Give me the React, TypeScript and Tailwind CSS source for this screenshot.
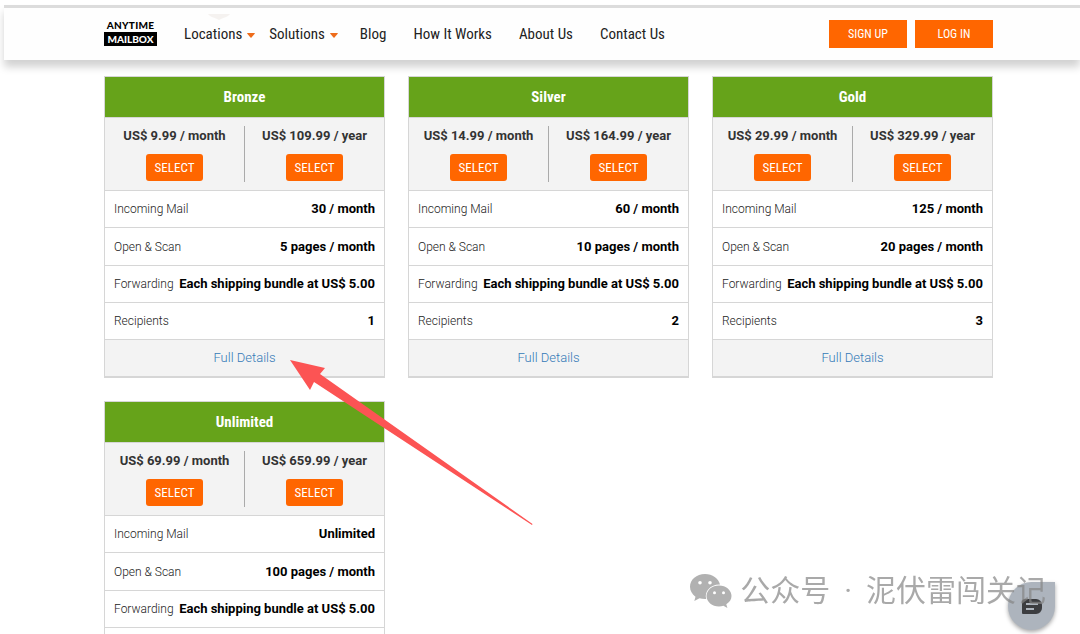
import React from 'react';

interface Plan {
  name: string;
  monthly: string;
  yearly: string;
  mail: string;
  scan: string;
  recipients: string;
}

const plans: Plan[] = [
  { name: 'Bronze', monthly: '9.99', yearly: '109.99', mail: '30 / month', scan: '5 pages / month', recipients: '1' },
  { name: 'Silver', monthly: '14.99', yearly: '164.99', mail: '60 / month', scan: '10 pages / month', recipients: '2' },
  { name: 'Gold', monthly: '29.99', yearly: '329.99', mail: '125 / month', scan: '20 pages / month', recipients: '3' },
  { name: 'Unlimited', monthly: '69.99', yearly: '659.99', mail: 'Unlimited', scan: '100 pages / month', recipients: 'Unlimited' },
];

const condensed = "font-['Roboto_Condensed','Liberation_Sans_Narrow',Roboto,sans-serif]";

function Logo() {
  return (
    <a href="#" className="flex w-[53px] flex-col items-center pb-[3px] font-[Lato,sans-serif] text-[10px] leading-3 font-black text-black">
      <span className="mb-px tracking-wide">ANYTIME</span>
      <span className="flex h-[14px] w-full items-center justify-center bg-black text-white">MAILBOX</span>
    </a>
  );
}

function Caret() {
  return (
    <svg className="mt-[3px] h-[5px] w-2 text-[#ee6c1b]" viewBox="0 0 8 5" fill="currentColor">
      <path d="M0.6 0h6.8q0.8 0 0.3 0.8L4.5 4.6q-0.5 0.5-1 0L0.3 0.8Q-0.2 0 0.6 0z" />
    </svg>
  );
}

function Header() {
  return (
    <header className="relative z-10 ml-1 border-t-3 border-[#dcdcdc] bg-[#fefefe] shadow-[0_7px_8px_0_rgba(0,0,0,0.18)]">
      <svg className="absolute top-[6px] left-[204px] h-[6px] w-[22px]" viewBox="0 0 22 6" fill="#f5f2f0">
        <path d="M0 0h22c-2 3-6 3.500-8 4.500L11 6 8 4.500C6 3.500 2 3 0 0z" />
      </svg>
      <div className="flex h-[52px] items-center pr-[87px] pl-[100px]">
        <Logo />
        <nav className={`ml-[27px] flex items-center text-[15px] text-[#222] ${condensed}`}>
          <a href="#" className="flex items-center gap-[5px]">Locations <Caret /></a>
          <a href="#" className="ml-[14px] flex items-center gap-[5px]">Solutions <Caret /></a>
          <a href="#" className="ml-[22px]">Blog</a>
          <a href="#" className="ml-[27px]">How It Works</a>
          <a href="#" className="ml-[27px]">About Us</a>
          <a href="#" className="ml-[27px]">Contact Us</a>
        </nav>
        <div className={`ml-auto flex gap-2 text-xs text-white ${condensed}`}>
          <button className="h-7 w-[78px] bg-[#ff6600]">SIGN UP</button>
          <button className="h-7 w-[78px] bg-[#ff6600]">LOG IN</button>
        </div>
      </div>
    </header>
  );
}

function Price({ amount, period }: { amount: string; period: string }) {
  return (
    <div className="flex flex-1 flex-col items-center gap-2 text-[#333]">
      <p className="text-[13px] leading-5 font-bold">US$ {amount} / {period}</p>
      <button className={`h-[27px] w-[57px] rounded-[3px] bg-[#ff6600] text-[13px] text-white ${condensed}`}>SELECT</button>
    </div>
  );
}

function PlanCard({ plan }: { plan: Plan }) {
  const rows = [
    ['Incoming Mail', plan.mail],
    ['Open & Scan', plan.scan],
    ['Forwarding', 'Each shipping bundle at US$ 5.00'],
    ['Recipients', plan.recipients],
  ];
  return (
    <section className="border border-b-2 border-[#d6d6d6] bg-white">
      <h2 className={`flex h-[41px] items-center justify-center border-b border-[#d6d6d6] bg-[#66a31a] text-[15px] font-bold text-white ${condensed}`}>{plan.name}</h2>
      <div className="flex h-[72px] items-start bg-[#f3f3f3] pt-2">
        <Price amount={plan.monthly} period="month" />
        <div className="h-14 border-l border-[#aaa]" />
        <Price amount={plan.yearly} period="year" />
      </div>
      <table className="h-[149px] w-full table-fixed border-collapse text-[13px]">
        <tbody>
          {rows.map(([label, value]) => (
            <tr key={label} className="border-t border-[#d6d6d6]">
              <th scope="row" className="w-[74px] pl-[9px] text-left text-xs font-light whitespace-nowrap text-[#222]">{label}</th>
              <td className="pr-[9px] text-right font-bold whitespace-nowrap text-black">{value}</td>
            </tr>
          ))}
        </tbody>
      </table>
      <div className="flex h-[37px] items-center justify-center border-t border-[#d6d6d6] bg-[#f3f3f3]">
        <a href="#" className="text-[13px] font-light text-[#337ab7]">Full Details</a>
      </div>
    </section>
  );
}

function Arrow() {
  return (
    <svg className="absolute top-[360px] left-[290px] h-[165px] w-[243px]" viewBox="0 0 243 165" fill="#fc5454">
      <path d="M0 0L35 8L30 14L242.500 164L242 165L24 22L20 30Z" />
    </svg>
  );
}

function ChatButton() {
  return (
    <button aria-label="Chat" className="fixed right-[25px] bottom-1 flex h-12 w-[47px] items-center justify-center rounded-full rounded-tr-md bg-[#adb4bd] shadow-[0_2px_4px_rgba(0,0,0,0.35)]">
      <svg className="h-[15px] w-5" viewBox="0 0 20 15" fill="none">
        <path d="M3 0h11a6 6 0 0 1 6 6v3a6 6 0 0 1-6 6H1a1 1 0 0 1-1-1V3a3 3 0 0 1 3-3z" fill="#3c3d40" />
        <path d="M4 5h12M4 10h8" stroke="#adb4bd" strokeWidth="2" />
      </svg>
    </button>
  );
}

function Watermark() {
  return (
    <div className="fixed right-[34px] bottom-[23px] flex items-center gap-2 opacity-70">
      <svg className="h-[34px] w-[42px]" viewBox="0 0 42 34">
        <path d="M15 0C6.500 0 0 5.500 0 12.800c0 4 2.200 7.600 5.500 10L4.300 27l5.200-2.700c1.700.5 3.500.8 5.500.8h1.200C14 17 21 10 30 10.400 28.500 4.300 22.500 0 15 0z" fill="#909090" />
        <path d="M29 11.500c-7 0-12.500 4.700-12.500 10.500S22 32.500 29 32.500c1.600 0 3-.2 4.400-.7l4 2.200-1.100-3.700c3.200-2 5.200-5 5.200-8.300 0-5.800-5.500-10.500-12.500-10.500z" fill="#909090" />
        <g fill="#fff">
          <circle cx="10" cy="8.800" r="1.800" />
          <circle cx="20" cy="8.800" r="1.800" />
          <circle cx="24.500" cy="18.800" r="1.500" />
          <circle cx="33.500" cy="18.800" r="1.500" />
        </g>
      </svg>
      <p className="flex gap-[14px] font-[Roboto,'Noto_Sans_CJK_SC',sans-serif] text-[30px] leading-10 whitespace-nowrap text-[#858585]">
        <span>公众号</span>
        <span>·</span>
        <span>泥伏雷闯关记</span>
      </p>
    </div>
  );
}

export default function App() {
  return (
    <div className="relative min-h-screen bg-white pt-[5px] font-[Roboto,sans-serif]">
      <Header />
      <main className="grid grid-cols-3 items-start gap-[23px] pt-4 pr-[87px] pb-6 pl-[104px]">
        {plans.map((plan) => (
          <PlanCard key={plan.name} plan={plan} />
        ))}
      </main>
      <Arrow />
      <ChatButton />
      <Watermark />
    </div>
  );
}
